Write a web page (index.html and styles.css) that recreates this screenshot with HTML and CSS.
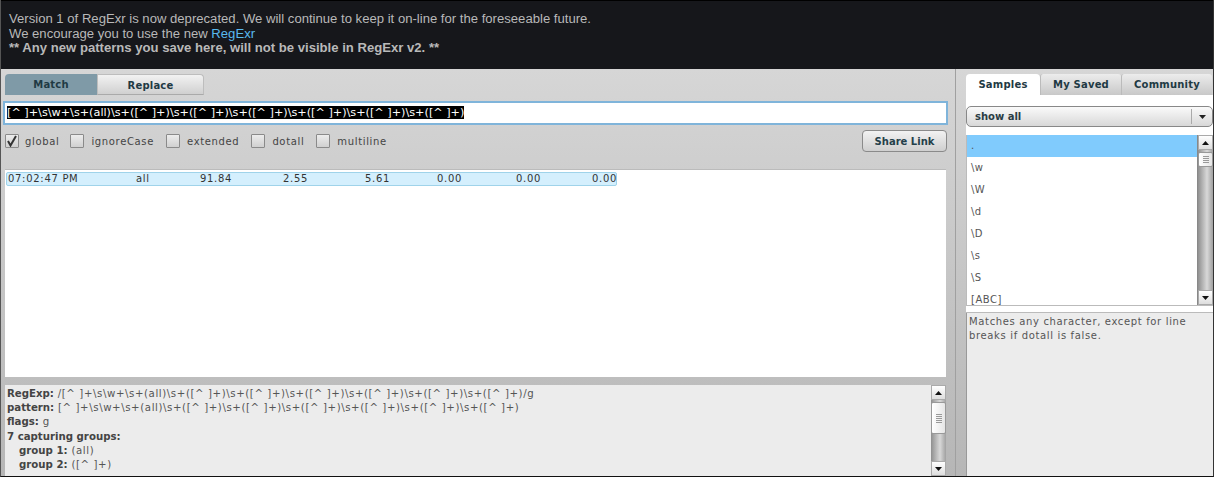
FILE: index.html
```html
<!DOCTYPE html>
<html lang="en">
<head>
<meta charset="utf-8">
<title>RegExr</title>
<link rel="stylesheet" href="styles.css">
</head>
<body>
<div class="app">
  <header class="notice">
    <div>Version 1 of RegExr is now deprecated. We will continue to keep it on-line for the foreseeable future.</div>
    <div>We encourage you to use the new <a href="#">RegExr</a></div>
    <div class="strong">** Any new patterns you save here, will not be visible in RegExr v2. **</div>
  </header>
  <div class="main">
    <section class="left">
      <div class="modes">
        <div class="mode active">Match</div>
        <div class="mode">Replace</div>
      </div>
      <div class="pattern"><span class="selected">[^ ]+\s\w+\s+(all)\s+([^ ]+)\s+([^ ]+)\s+([^ ]+)\s+([^ ]+)\s+([^ ]+)\s+([^ ]+)</span></div>
      <div class="options">
        <label class="opt first"><span class="box"><svg width="12" height="12" viewBox="0 0 12 12"><path d="M2 6 L4.5 10.5 L10 1" fill="none" stroke="#333" stroke-width="2"/></svg></span>global</label>
        <label class="opt"><span class="box"></span>ignoreCase</label>
        <label class="opt"><span class="box"></span>extended</label>
        <label class="opt"><span class="box"></span>dotall</label>
        <label class="opt"><span class="box"></span>multiline</label>
        <button class="share">Share Link</button>
      </div>
      <div class="results">
        <div class="match">
          <span class="c1">07:02:47 PM</span><span class="c2">all</span><span class="c3">91.84</span><span class="c4">2.55</span><span class="c5">5.61</span><span class="c6">0.00</span><span class="c7">0.00</span><span class="c8">0.00</span>
        </div>
      </div>
      <div class="details">
        <div class="details-text">
          <div><b>RegExp:</b> /[^ ]+\s\w+\s+(all)\s+([^ ]+)\s+([^ ]+)\s+([^ ]+)\s+([^ ]+)\s+([^ ]+)\s+([^ ]+)/g</div>
          <div><b>pattern:</b> [^ ]+\s\w+\s+(all)\s+([^ ]+)\s+([^ ]+)\s+([^ ]+)\s+([^ ]+)\s+([^ ]+)\s+([^ ]+)</div>
          <div><b>flags:</b> g</div>
          <div><b>7 capturing groups:</b></div>
          <div class="indent"><b>group 1:</b> (all)</div>
          <div class="indent"><b>group 2:</b> ([^ ]+)</div>
        </div>
        <div class="scroll">
          <div class="arrow"><svg width="7" height="4" viewBox="0 0 7 4"><path d="M3.5 0L7 4H0z" fill="#111"/></svg></div>
          <div class="track"><div class="thumb tall"><i></i><i></i><i></i><i></i><i></i></div></div>
          <div class="arrow"><svg width="7" height="4" viewBox="0 0 7 4"><path d="M0 0H7L3.5 4z" fill="#111"/></svg></div>
        </div>
      </div>
    </section>
    <aside class="right">
      <div class="tabs">
        <div class="tab active">Samples</div>
        <div class="tab saved">My Saved</div>
        <div class="tab community">Community</div>
      </div>
      <div class="tabbody">
        <div class="select"><span>show all</span><span class="caret"><svg width="7" height="4" viewBox="0 0 7 4"><path d="M0 0H7L3.5 4z" fill="#222"/></svg></span></div>
      </div>
      <div class="listwrap">
        <ul class="list">
          <li class="on">.</li>
          <li>\w</li>
          <li>\W</li>
          <li>\d</li>
          <li>\D</li>
          <li>\s</li>
          <li>\S</li>
          <li>[ABC]</li>
        </ul>
        <div class="scroll small">
          <div class="arrow"><svg width="7" height="4" viewBox="0 0 7 4"><path d="M3.5 0L7 4H0z" fill="#111"/></svg></div>
          <div class="track"><div class="thumb"><i></i><i></i><i></i><i></i></div></div>
          <div class="arrow"><svg width="7" height="4" viewBox="0 0 7 4"><path d="M0 0H7L3.5 4z" fill="#111"/></svg></div>
        </div>
      </div>
      <div class="gapbar"></div>
      <div class="desc">Matches any character, except for line breaks if dotall is false.</div>
    </aside>
  </div>
</div>
</body>
</html>
```
FILE: styles.css
```css
html, body { margin: 0; height: 100%; overflow: hidden; }
body { font-family: "DejaVu Sans", Verdana, sans-serif; font-size: 10px; color: #444; }
.app { width: 1214px; height: 477px; box-sizing: border-box; display: flex; flex-direction: column; border-left: 1px solid #555; border-right: 1px solid #333; border-bottom: 1px solid #111; overflow: hidden; }
.notice { height: 69px; flex: none; box-sizing: border-box; background: #16171b; border-top: 1px solid #000; margin: 0 -1px; padding: 11px 0 0 9px; color: #b9b9b9; font: 13.12px/14.5px "Liberation Sans", Arial, sans-serif; }
.notice a { color: #5ab9ee; text-decoration: none; }
.notice .strong { font-weight: bold; }
.main { flex: 1; display: flex; min-height: 0; background: linear-gradient(#d6d6d6, #b6b6b6); }
.left { width: 950px; flex: none; padding: 5px 0 0 4px; display: flex; flex-direction: column; min-height: 0; border-right: 1px solid #a0a0a0; }
.modes { display: flex; height: 21px; flex: none; }
.mode { width: 107px; height: 21px; line-height: 21px; text-align: center; font-weight: bold; font-size: 10px; color: #1f3a44; background: linear-gradient(#f2f2f2, #d0d0d0); border: 1px solid #bdbdbd; border-bottom-color: #aaa; box-sizing: border-box; border-radius: 0 4px 0 0; letter-spacing: .2px; }
.mode.active { width: 92px; background: #7f9aa7; border: 0; border-radius: 4px 0 0 0; line-height: 22px; }
.pattern { margin: 6px 0 0 -2px; width: 945px; height: 24px; box-sizing: border-box; background: #fff; border: 2px solid #7fb4da; padding: 1px 2px; font-size: 11.22px; line-height: 18px; white-space: pre; flex: none; overflow: hidden; }
.selected { background: #000; color: #fff; }
.options { display: flex; align-items: center; height: 32px; width: 942px; flex: none; color: #444; font-size: 10px; letter-spacing: .65px; }
.opt { display: flex; align-items: center; margin-right: 12px; }
.opt.first { margin-right: 11px; }
.first .box { margin-right: 6px; }
.box { width: 12px; height: 12px; border: 1px solid #8a8a8a; background: linear-gradient(#ececec, #d0d0d0); border-radius: 1px; margin-right: 7px; display: block; }
.box svg { display: block; }
.share { margin-left: auto; width: 85px; height: 22px; border: 1px solid #8a8a8a; border-radius: 4px; background: linear-gradient(#f2f2f2, #cfcfcf); font: bold 10px "DejaVu Sans", sans-serif; color: #24404a; letter-spacing: 0; padding: 0; }
.results { margin-top: 12px; width: 941px; height: 208px; background: #fff; flex: none; border-top: 1px solid #bbb; box-sizing: border-box; padding: 2px 0 0 1px; }
.match { width: 608px; height: 12px; padding-left: 1px; background: #d4effd; border: 1px solid #9fd3ea; border-radius: 2px; color: #333; display: flex; line-height: 12px; font-size: 10px; white-space: pre; letter-spacing: .7px; }
.match span { display: block; flex: none; }
.c1 { width: 128px; } .c2 { width: 64px; } .c3 { width: 83px; } .c4 { width: 82px; } .c5 { width: 72px; } .c6 { width: 79px; } .c7 { width: 76px; } .c8 { width: 24px; }
.details { margin-top: 8px; width: 941px; flex: 1; min-height: 0; display: flex; background: #ececec; overflow: hidden; }
.details-text { flex: 1; padding: 2px 0 0 2px; font-size: 10.2px; line-height: 14.2px; color: #555; white-space: nowrap; letter-spacing: .59px; }
.details-text b { color: #444; letter-spacing: 0; }
.indent { padding-left: 12px; }
.scroll { width: 16px; flex: none; box-sizing: border-box; display: flex; flex-direction: column; }
.details .scroll { width: 15px; }
.arrow { height: 15px; flex: none; background: linear-gradient(#fff, #ddd); display: flex; align-items: center; justify-content: center; border: 1px solid #aaa; box-sizing: border-box; }
.track { flex: 1; background: linear-gradient(90deg, #8f8f8f, #d8d8d8 60%, #a0a0a0); min-height: 0; }
.thumb { height: 13px; margin-top: 2px; background: linear-gradient(90deg, #fff, #e6e6e6); border: 1px solid #999; border-radius: 2px; display: flex; flex-direction: column; align-items: center; justify-content: center; gap: 1px; }
.thumb.tall { height: 30px; }
.thumb i { display: block; width: 6px; height: 1px; background: #999; }
.right { flex: 1; min-width: 0; margin-left: 10px; padding-top: 5px; display: flex; flex-direction: column; }
.tabs { display: flex; height: 21px; flex: none; margin-right: 1px; }
.tab { height: 21px; line-height: 21px; text-align: center; font-weight: bold; font-size: 10px; color: #1f3a44; background: linear-gradient(#ececec, #c8c8c8); border-left: 1px solid #bbb; box-sizing: border-box; letter-spacing: .2px; border-radius: 3px 3px 0 0; }
.tab.active { width: 74px; background: #fff; border: 0; line-height: 22px; border-radius: 4px 4px 0 0; }
.tab.saved { width: 81px; }
.tab.community { flex: 1; }
.tabbody { background: #fff; height: 40px; flex: none; box-sizing: border-box; padding-top: 11px; }
.select { height: 21px; border: 1px solid #888; border-radius: 5px; box-sizing: border-box; background: linear-gradient(#fafafa, #d8d8d8); display: flex; align-items: center; justify-content: space-between; padding-left: 8px; font-weight: bold; color: #2a3c44; }
.caret { width: 20px; height: 15px; border-left: 1px solid #aaa; display: flex; align-items: center; justify-content: center; }
.listwrap { display: flex; height: 170px; flex: none; background: #fff; overflow: hidden; }
.list { list-style: none; margin: 0; padding: 0; flex: 1; border-left: 1px solid #bbb; color: #555; letter-spacing: .5px; }
.list li { height: 22px; line-height: 22px; padding-left: 4px; }
.list li.on { background: #80cbfd; }
.small { border-left: 1px solid #888; }
.gapbar { height: 8px; flex: none; background: #fff; border-top: 1px solid #bbb; border-bottom: 1px solid #bbb; box-sizing: border-box; }
.desc { flex: 1; padding: 2px 3px 0 2px; background: #ececec; border-left: 1px solid #999; font-size: 10px; line-height: 14px; color: #555; letter-spacing: .65px; }
```
